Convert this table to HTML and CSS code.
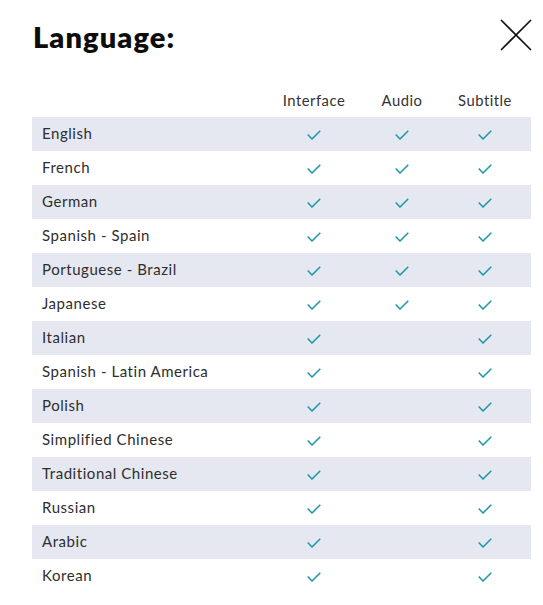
FILE: index.html
```html
<!DOCTYPE html>
<html>
<head>
<meta charset="utf-8">
<link rel="stylesheet" href="styles.css">
</head>
<body>
<div class="modal">
  <div class="top">
    <h1 class="title">Language:</h1>
    <button class="close" aria-label="Close">
      <svg width="32" height="32" viewBox="0 0 32 32"><path d="M1 1 L31 31 M31 1 L1 31" stroke="#111" stroke-width="1.6" fill="none"/></svg>
    </button>
  </div>
  <div class="table">
    <div class="row head"><span></span><span class="c">Interface</span><span class="c">Audio</span><span class="c">Subtitle</span></div>
    <div class="row alt"><span class="name">English</span><span class="c"><i class="ck"></i></span><span class="c"><i class="ck"></i></span><span class="c"><i class="ck"></i></span></div>
    <div class="row"><span class="name">French</span><span class="c"><i class="ck"></i></span><span class="c"><i class="ck"></i></span><span class="c"><i class="ck"></i></span></div>
    <div class="row alt"><span class="name">German</span><span class="c"><i class="ck"></i></span><span class="c"><i class="ck"></i></span><span class="c"><i class="ck"></i></span></div>
    <div class="row"><span class="name">Spanish - Spain</span><span class="c"><i class="ck"></i></span><span class="c"><i class="ck"></i></span><span class="c"><i class="ck"></i></span></div>
    <div class="row alt"><span class="name">Portuguese - Brazil</span><span class="c"><i class="ck"></i></span><span class="c"><i class="ck"></i></span><span class="c"><i class="ck"></i></span></div>
    <div class="row"><span class="name">Japanese</span><span class="c"><i class="ck"></i></span><span class="c"><i class="ck"></i></span><span class="c"><i class="ck"></i></span></div>
    <div class="row alt"><span class="name">Italian</span><span class="c"><i class="ck"></i></span><span class="c"></span><span class="c"><i class="ck"></i></span></div>
    <div class="row"><span class="name">Spanish - Latin America</span><span class="c"><i class="ck"></i></span><span class="c"></span><span class="c"><i class="ck"></i></span></div>
    <div class="row alt"><span class="name">Polish</span><span class="c"><i class="ck"></i></span><span class="c"></span><span class="c"><i class="ck"></i></span></div>
    <div class="row"><span class="name">Simplified Chinese</span><span class="c"><i class="ck"></i></span><span class="c"></span><span class="c"><i class="ck"></i></span></div>
    <div class="row alt"><span class="name">Traditional Chinese</span><span class="c"><i class="ck"></i></span><span class="c"></span><span class="c"><i class="ck"></i></span></div>
    <div class="row"><span class="name">Russian</span><span class="c"><i class="ck"></i></span><span class="c"></span><span class="c"><i class="ck"></i></span></div>
    <div class="row alt"><span class="name">Arabic</span><span class="c"><i class="ck"></i></span><span class="c"></span><span class="c"><i class="ck"></i></span></div>
    <div class="row"><span class="name">Korean</span><span class="c"><i class="ck"></i></span><span class="c"></span><span class="c"><i class="ck"></i></span></div>
  </div>
</div>
</body>
</html>
```
FILE: styles.css
```css
html, body {
  margin: 0;
  padding: 0;
  background: #fff;
}
.modal {
  width: 499px;
  padding: 19px 12px 0 32px;
  font-family: "Lato", "Noto Sans", sans-serif;
  color: #2b2b2b;
}
.top {
  display: flex;
  justify-content: space-between;
  align-items: flex-start;
  height: 68px;
}
.title {
  margin: 0;
  font-size: 29px;
  font-weight: 800;
  letter-spacing: 1.1px;
  color: #0d0d0d;
  line-height: 36px;
  padding-left: 1px;
}
.close {
  border: 0;
  background: none;
  padding: 0;
  margin: 0 -1px 0 0;
  width: 32px;
  height: 32px;
  cursor: pointer;
}
.close svg { display: block; }
.table {
  display: flex;
  flex-direction: column;
}
.row {
  display: grid;
  grid-template-columns: 238px 88px 88px 78px;
  padding-right: 7px;
  height: 34px;
  align-items: center;
  font-size: 15px;
  letter-spacing: 0.55px;
}
.row.head {
  height: 30px;
  font-size: 14.8px;
  letter-spacing: 0.5px;
  color: #333;
  align-items: start;
  padding-top: 4px;
  box-sizing: border-box;
}
.row.alt { background: #e5e8f0; }
.name {
  padding-left: 10px;
  color: #2e2e2e;
  position: relative;
  top: -1px;
}
.c {
  display: flex;
  justify-content: center;
}
.ck {
  display: block;
  width: 14px;
  height: 10px;
  background: no-repeat center/14px 10px url("data:image/svg+xml,%3Csvg xmlns='http://www.w3.org/2000/svg' viewBox='0 0 14 10'%3E%3Cpath d='M0.7 4.6 L5 9 L13.3 0.7' fill='none' stroke='%231b97a7' stroke-width='1.5'/%3E%3C/svg%3E");
  position: relative;
  top: 1px;
}
```
